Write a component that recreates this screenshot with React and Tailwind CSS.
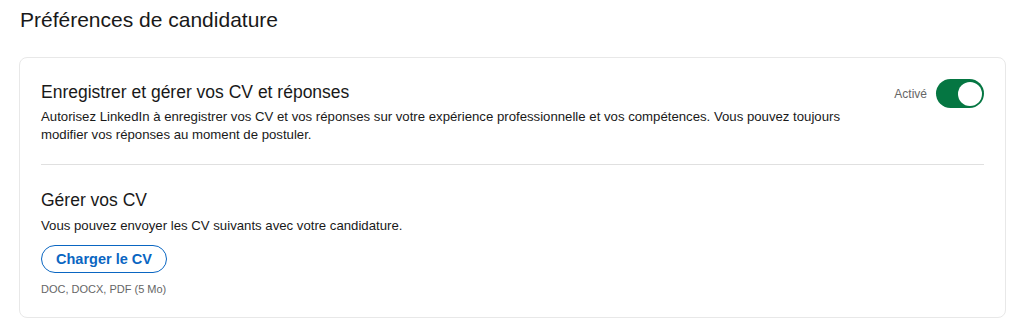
import React, { useState } from 'react';

export default function App() {
  const [active, setActive] = useState(true);

  return (
    <div className="w-[1024px] h-[334px] bg-white text-[#000000e6] font-['Liberation_Sans',Arial,sans-serif]">
      <div className="px-5 pt-[6px]">
        <h1 className="text-[21px] leading-[28px] text-[#191919]">Préférences de candidature</h1>

        {/* Card */}
        <div className="mt-[23px] w-[987px] -ml-px border border-[#e8e8e8] rounded-lg px-[21px] pt-[21px] pb-[20px]">
          <div className="flex items-start justify-between">
            <div className="w-[820px]">
              <h2 className="text-[17.5px] leading-[26px] text-[#191919]">Enregistrer et gérer vos CV et réponses</h2>
              <p className="mt-[3px] text-[13.2px] leading-[18px] text-[#191919]">
                Autorisez LinkedIn à enregistrer vos CV et vos réponses sur votre expérience professionnelle et vos compétences. Vous pouvez toujours modifier vos réponses au moment de postuler.
              </p>
            </div>
            <div className="flex items-center gap-[9px] mt-[0px]">
              <span className="text-[12px] text-[#666666]">Activé</span>
              <button
                onClick={() => setActive(a => !a)}
                className={`w-[48px] h-[29px] rounded-full p-[2.5px] flex items-center ${active ? 'bg-[#057642] justify-end' : 'bg-[#666666] justify-start'}`}
              >
                <span className="w-[24px] h-[24px] rounded-full bg-white block"></span>
              </button>
            </div>
          </div>

          <div className="mt-[20px] border-t border-[#e0e0e0]"></div>

          <h2 className="mt-[22px] text-[17.5px] leading-[26px] text-[#191919]">Gérer vos CV</h2>
          <p className="mt-[4px] text-[13.2px] leading-[18px] text-[#191919]">Vous pouvez envoyer les CV suivants avec votre candidature.</p>
          <button className="mt-[10px] h-[28px] px-[14px] rounded-full border border-[#0a66c2] text-[#0a66c2] text-[14.5px] font-bold leading-none">
            Charger le CV
          </button>
          <p className="mt-[8px] text-[11px] leading-[16px] text-[#666666]">DOC, DOCX, PDF (5 Mo)</p>
        </div>
      </div>
    </div>
  );
}
